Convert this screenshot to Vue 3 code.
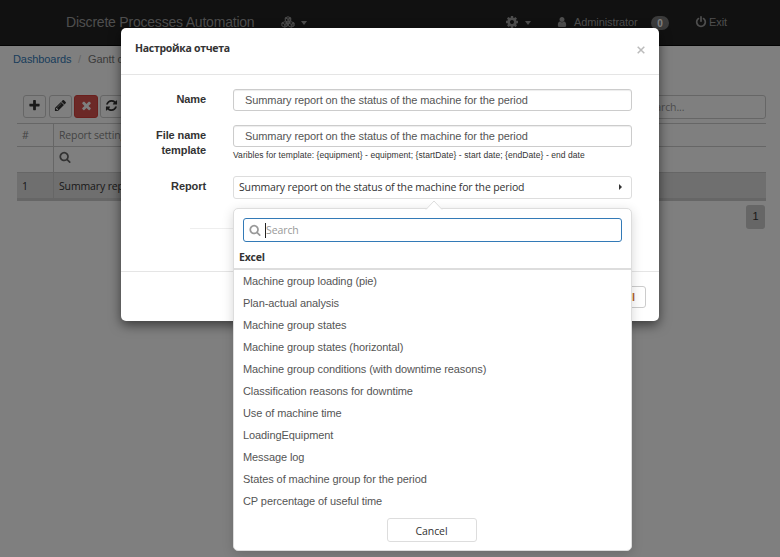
<script setup>
import { ref } from 'vue'

const icons = {
  plus: 'M1600 736v192q0 40-28 68t-68 28h-416v416q0 40-28 68t-68 28h-192q-40 0-68-28t-28-68v-416h-416q-40 0-68-28t-28-68v-192q0-40 28-68t68-28h416v-416q0-40 28-68t68-28h192q40 0 68 28t28 68v416h416q40 0 68 28t28 68z',
  pencil: 'M491 1536l91-91-235-235-91 91v107h128v128h107zm523-928q0-22-22-22-10 0-17 7l-542 542q-7 7-7 17 0 22 22 22 10 0 17-7l542-542q7-7 7-17zm-54-192l416 416-832 832h-416v-416zm683 96q0 53-37 90l-166 166-416-416 166-165q36-38 90-38 53 0 91 38l235 234q37 39 37 91z',
  times: 'M1490 1322q0 40-28 68l-136 136q-28 28-68 28t-68-28l-294-294-294 294q-28 28-68 28t-68-28l-136-136q-28-28-28-68t28-68l294-294-294-294q-28-28-28-68t28-68l136-136q28-28 68-28t68 28l294 294 294-294q28-28 68-28t68 28l136 136q28 28 28 68t-28 68l-294 294 294 294q28 28 28 68z',
  refresh: 'M1639 1056q0 5-1 7-64 268-268 434.5t-478 166.5q-146 0-282.5-55t-243.5-157l-129 129q-19 19-45 19t-45-19-19-45v-448q0-26 19-45t45-19h448q26 0 45 19t19 45-19 45l-137 137q71 66 161 102t187 36q134 0 250-65t186-179q11-17 53-117 8-23 30-23h192q13 0 22.5 9.5t9.5 22.5zm25-800v448q0 26-19 45t-45 19h-448q-26 0-45-19t-19-45 19-45l138-138q-148-137-349-137-134 0-250 65t-186 179q-11 17-53 117-8 23-30 23h-199q-13 0-22.5-9.5t-9.5-22.5v-7q65-268 270-434.5t480-166.5q146 0 284 55.5t245 156.5l130-129q19-19 45-19t45 19 19 45z',
  cog: 'M1152 896q0-106-75-181t-181-75-181 75-75 181 75 181 181 75 181-75 75-181zm512-109v222q0 12-8 23t-20 13l-185 28q-19 54-39 91 35 50 107 138 10 12 10 25t-9 23q-27 37-99 108t-94 71q-12 0-26-9l-138-108q-44 23-91 38-16 136-29 186-7 28-36 28h-222q-14 0-24.5-8.5t-11.5-21.5l-28-184q-49-16-90-37l-141 107q-10 9-25 9-14 0-25-11-126-114-165-168-7-10-7-23 0-12 8-23 15-21 51-66.5t54-70.5q-27-50-41-99l-183-27q-13-2-21-12.5t-8-23.5v-222q0-12 8-23t19-13l186-28q14-46 39-92-40-57-107-138-10-12-10-24 0-10 9-23 26-36 98.5-107.5t94.5-71.5q13 0 26 10l138 107q44-23 91-38 16-136 29-186 7-28 36-28h222q14 0 24.5 8.5t11.5 21.5l28 184q49 16 90 37l142-107q9-9 24-9 13 0 25 10 129 119 165 170 7 8 7 22 0 12-8 23-15 21-51 66.5t-54 70.5q26 50 41 98l183 28q13 2 21 12.5t8 23.5z',
  power: 'M1664 896q0 156-61 298t-164 245-245 164-298 61-298-61-245-164-164-245-61-298q0-182 80.5-343t226.5-270q43-32 95.5-25t83.5 50q32 42 24.5 94.5t-49.5 84.5q-98 74-151.5 181t-53.5 228q0 104 40.5 198.5t109.5 163.5 163.5 109.5 198.5 40.5 198.5-40.5 163.5-109.5 109.5-163.5 40.5-198.5q0-121-53.5-228t-151.5-181q-42-32-49.5-84.5t24.5-94.5q31-43 84-50t95 25q146 109 226.5 270t80.5 343zm-640-768v640q0 52-38 90t-90 38-90-38-38-90v-640q0-52 38-90t90-38 90 38 38 90z',
  search: 'M1216 832q0-185-131.5-316.5t-316.5-131.5-316.5 131.5-131.5 316.5 131.5 316.5 316.5 131.5 316.5-131.5 131.5-316.5zm512 832q0 52-38 90t-90 38q-54 0-90-38l-343-342q-179 124-399 124-143 0-273.5-55.5t-225-150-150-225-55.5-273.5 55.5-273.5 150-225 225-150 273.5-55.5 273.5 55.5 225 150 150 225 55.5 273.5q0 220-124 399l343 343q37 37 37 90z',
  user: 'M1536 1399q0 109-62.5 187t-150.5 78h-854q-88 0-150.5-78t-62.5-187q0-85 8.5-160.5t31.5-152 58.5-131 94-89 134.5-34.5q131 128 313 128t313-128q76 0 134.5 34.5t94 89 58.5 131 31.5 152 8.5 160.5zm-256-887q0 159-112.5 271.5t-271.5 112.5-271.5-112.5-112.5-271.5 112.5-271.5 271.5-112.5 271.5 112.5 112.5 271.5z',
}

const reportName = ref('Summary report on the status of the machine for the period')
const reports = [
  'Machine group loading (pie)',
  'Plan-actual analysis',
  'Machine group states',
  'Machine group states (horizontal)',
  'Machine group conditions (with downtime reasons)',
  'Classification reasons for downtime',
  'Use of machine time',
  'LoadingEquipment',
  'Message log',
  'States of machine group for the period',
  'CP percentage of useful time',
]
</script>

<template>
  <div class="page">
    <header class="navbar">
      <span class="brand">Discrete Processes Automation</span>
      <svg class="cubes" viewBox="0 0 28 24">
        <g fill="none" stroke="currentColor" stroke-width="2" stroke-linejoin="round">
          <path d="M14 1.5l5.500 2.300v6L14 12.200 8.500 9.800v-6zM8.500 3.800L14 6.200l5.500-2.400M14 6.200v6" />
          <path d="M7.500 11.500l5.700 2.400v6l-5.700 2.600-5.700-2.600v-6zM1.800 13.900l5.700 2.500 5.700-2.500M7.500 16.400v6" />
          <path d="M20.500 11.500l5.700 2.400v6l-5.700 2.600-5.700-2.600v-6zM14.800 13.900l5.700 2.500 5.700-2.500M20.500 16.400v6" />
        </g>
        <path fill="currentColor" d="M14 6.200l5.500-2.400v6L14 12.200zM7.500 16.400l5.700-2.500v6l-5.700 2.600zM20.500 16.400l5.700-2.500v6l-5.700 2.600z" opacity=".55" />
      </svg>
      <i class="caret caret-first"></i>
      <svg class="cog" viewBox="128 128 1536 1536"><path :d="icons.cog" /></svg>
      <i class="caret caret-second"></i>
      <svg class="user" viewBox="128 128 1536 1536"><path :d="icons.user" /></svg>
      <span class="admin">Administrator</span>
      <span class="badge">0</span>
      <svg class="power" viewBox="0 0 1792 1792"><path :d="icons.power" /></svg>
      <span class="exit">Exit</span>
    </header>

    <nav class="crumbs">
      <a>Dashboards</a><span class="slash">/</span><span class="current">Gantt chart</span>
    </nav>

    <div class="toolbar">
      <button class="tool"><svg viewBox="0 0 1792 1792"><path :d="icons.plus" /></svg></button>
      <button class="tool"><svg viewBox="0 0 1792 1792"><path :d="icons.pencil" /></svg></button>
      <button class="tool danger"><svg viewBox="0 0 1792 1792"><path :d="icons.times" /></svg></button>
      <button class="tool"><svg viewBox="0 0 1792 1792"><path :d="icons.refresh" /></svg></button>
      <div class="grid-search">Search...</div>
    </div>

    <div class="grid">
      <div class="grid-row head"><span class="num">#</span><span class="cell">Report settings</span></div>
      <div class="grid-row filter">
        <span class="num"></span>
        <span class="cell"><svg viewBox="0 0 1792 1792"><path :d="icons.search" /></svg></span>
      </div>
      <div class="grid-row selected"><span class="num">1</span><span class="cell">Summary report</span></div>
    </div>
    <div class="pager"><span>1</span></div>

    <div class="backdrop">
      <section class="modal">
        <div class="modal-head">
          <h4>Настройка отчета</h4>
          <svg class="close" viewBox="0 0 8 8"><path d="M.7.700l6.600 6.600M7.300.700L.700 7.300" /></svg>
        </div>
        <div class="modal-body">
          <div class="row">
            <label>Name</label>
            <div class="input">{{ reportName }}</div>
          </div>
          <div class="row template-row">
            <label>File name<br />template</label>
            <div class="field">
              <div class="input">{{ reportName }}</div>
              <small>Varibles for template: {equipment} - equipment; {startDate} - start date; {endDate} - end date</small>
            </div>
          </div>
          <div class="row report-row">
            <label>Report</label>
            <div class="field">
              <div class="select"><span>{{ reportName }}</span><i></i></div>
              <div class="dropdown">
                <svg class="pointer" viewBox="0 0 18 10"><path d="M1 9.500L9 1l8 8.500" /></svg>
                <div class="search">
                  <svg viewBox="0 0 1792 1792"><path :d="icons.search" /></svg>
                  <i class="cursor"></i><span>Search</span>
                </div>
                <div class="group">Excel</div>
                <ul>
                  <li v-for="item in reports" :key="item">{{ item }}</li>
                </ul>
                <div class="actions"><button>Cancel</button></div>
              </div>
            </div>
          </div>
          <div class="rule"></div>
        </div>
        <div class="modal-foot"><button>Cancel</button></div>
      </section>
    </div>
  </div>
</template>

<style>
body { margin: 0; overflow: hidden; }
</style>

<style scoped>
* { box-sizing: border-box; }
.page {
  position: relative;
  width: 780px;
  height: 557px;
  overflow: hidden;
  background: #fff;
  color: #333;
  font: 11px/15px "Liberation Sans", Arial, sans-serif;
  letter-spacing: -.09px;
}
svg { display: block; flex: none; fill: currentColor; }
button { font: inherit; color: inherit; letter-spacing: inherit; padding: 0; }

.navbar {
  display: flex;
  align-items: center;
  height: 46px;
  padding: 0 0 1px 66px;
  background: #222;
  border-bottom: 1px solid #080808;
  color: #9d9d9d;
  white-space: nowrap;
}
.brand { width: 188px; font-size: 14px; letter-spacing: -.21px; }
.cubes { width: 14px; height: 12px; margin-left: 27px; }
.caret { border: 3.500px solid transparent; border-top: 4px solid; border-bottom: 0; flex: none; margin-top: 1px; }
.caret-first { margin-left: 6px; }
.cog { width: 12px; height: 12px; margin-left: 199px; }
.caret-second { margin-left: 7px; }
.user { width: 10px; height: 10px; margin-left: 26px; }
.admin { width: 64px; margin-left: 7px; }
.badge {
  width: 18px;
  height: 14px;
  margin: 2px 0 0 13px;
  border-radius: 7px;
  background: #777;
  color: #fff;
  font-weight: bold;
  font-size: 10px;
  line-height: 15px;
  text-align: center;
}
.power { width: 12px; height: 12px; margin-left: 26px; }
.exit { margin-left: 2px; }

.crumbs { display: flex; height: 49px; padding: 6px 0 0 13px; }
.crumbs a { width: 58px; color: #337ab7; }
.slash { width: 17px; padding-left: 7px; color: #ccc; }
.current { color: #777; }

.toolbar { display: flex; gap: 3px; height: 28px; padding: 0 14px 0 23px; }
.tool {
  display: flex;
  align-items: center;
  justify-content: center;
  width: 23px;
  height: 23px;
  background: #fff;
  border: 1px solid #ccc;
  border-radius: 3px;
}
.tool svg { width: 13px; height: 13px; margin-top: -2px; }
.tool.danger { width: 24px; margin: 0 -1px; background: #d9534f; border-color: #d43f3a; color: #fff; }
.grid-search {
  width: 140px;
  height: 24px;
  margin-left: auto;
  padding: 4px 0 0 17px;
  border: 1px solid #ccc;
  border-radius: 3px;
  color: #999;
  font: 10.500px/15px "Open Sans", "Noto Sans", sans-serif;
  letter-spacing: -.14px;
}

.grid {
  margin: 0 14px 0 17px;
  border-top: 1px solid #ccc;
  font: 10.500px/15px "Open Sans", "Noto Sans", sans-serif;
  letter-spacing: -.14px;
}
.grid-row { display: flex; border-bottom: 1px solid #ccc; }
.num { width: 37px; padding-left: 5px; border-right: 1px solid #ccc; }
.cell { padding-left: 5px; white-space: nowrap; }
.head { height: 23px; line-height: 22px; color: #888; }
.filter { height: 25px; color: #666; border-bottom: 0; }
.filter svg { width: 12px; height: 12px; margin-top: 4px; }
.selected { height: 29px; line-height: 26px; background: #dedede; border-top: 1px solid #ccc; border-bottom: 3px solid #ccc; }
.pager { display: flex; justify-content: flex-end; padding: 4px 15px 0 0; }
.pager span { width: 19px; height: 24px; border-radius: 3px; background: #ccc; line-height: 22px; text-align: center; }

.backdrop { position: absolute; inset: 0; padding: 28px 0 0 121px; background: rgba(0, 0, 0, .5); }
.modal {
  width: 538px;
  height: 293px;
  background: #fff;
  border-radius: 5px;
  box-shadow: 0 4px 12px rgba(0, 0, 0, .55);
}
.modal-head {
  display: flex;
  justify-content: space-between;
  height: 47px;
  padding: 12px 14px 0;
  border-bottom: 1px solid #e5e5e5;
}
h4 { margin: 0; font: bold 10.500px/16px "Open Sans", "Noto Sans", sans-serif; letter-spacing: -.29px; }
.close { width: 8px; height: 8px; margin-top: 6px; stroke: #bbb; stroke-width: 1.500; }
.modal-body { display: flex; flex-direction: column; height: 196px; padding: 14px 27px 0 0; }
.row { display: flex; justify-content: space-between; height: 36px; }
label { width: 85px; padding-top: 3px; text-align: right; font-weight: bold; font-size: 11px; }
.field { position: relative; width: 399px; }
.input {
  width: 399px;
  height: 22px;
  padding-left: 11px;
  border: 1px solid #ccc;
  border-radius: 3px;
  box-shadow: inset 0 1px 1px rgba(0, 0, 0, .075);
  color: #555;
  line-height: 21px;
  white-space: nowrap;
}
.template-row { height: 51px; }
small { display: block; font-size: 8.500px; line-height: 16px; letter-spacing: .065px; white-space: nowrap; }
.report-row { height: 51px; }
.select {
  display: flex;
  align-items: center;
  justify-content: space-between;
  height: 23px;
  padding: 0 9px 0 5px;
  border: 1px solid #ddd;
  border-radius: 3px;
  font: 10.500px/15px "Open Sans", "Noto Sans", sans-serif;
  letter-spacing: -.15px;
  white-space: nowrap;
}
.select i { border: 3px solid transparent; border-left: 3px solid #333; border-right: 0; margin-bottom: 2px; }
.rule { height: 1px; margin: 1px 0 0 69px; background: #eee; }
.modal-foot { display: flex; justify-content: flex-end; padding: 14px 13px 0; border-top: 1px solid #e5e5e5; }
.modal-foot button {
  width: 60px;
  height: 22px;
  padding-right: 10px;
  background: #fff;
  border: 1px solid #ccc;
  border-radius: 3px;
  color: #b3622d;
  font-weight: bold;
  text-align: right;
}

.dropdown {
  position: absolute;
  top: 32px;
  left: 0;
  width: 399px;
  height: 343px;
  background: #fff;
  border: 1px solid #ddd;
  border-radius: 5px;
  box-shadow: 0 3px 12px rgba(0, 0, 0, .16);
}
.pointer { position: absolute; top: -9px; left: 191px; width: 18px; height: 10px; fill: #fff; stroke: #ddd; }
.search {
  display: flex;
  align-items: center;
  height: 24px;
  margin: 9px 9px 0;
  padding-left: 5px;
  border: 1px solid #337ab7;
  border-radius: 3px;
  color: #999;
  font: 10.500px/15px "Open Sans", "Noto Sans", sans-serif;
  letter-spacing: -.1px;
}
.search span { padding-top: 1px; }
.search svg { width: 12px; height: 12px; margin-bottom: 1px; }
.cursor { width: 1px; height: 15px; margin-left: 4px; background: #222; }
.group {
  height: 28px;
  padding: 7px 5px 0;
  border-bottom: 2px solid #ddd;
  font: bold 10.500px/16px "Open Sans", "Noto Sans", sans-serif;
  letter-spacing: -.2px;
}
ul { height: 237px; margin: 0; padding: 0 9px; overflow: hidden; list-style: none; color: #555; }
li { height: 22px; line-height: 23px; white-space: nowrap; }
.actions { display: flex; justify-content: center; padding: 11px 2px 0 0; }
.actions button {
  width: 90px;
  height: 24px;
  padding-top: 2px;
  background: #fff;
  border: 1px solid #ddd;
  border-radius: 3px;
  font: 10.500px/15px "Open Sans", "Noto Sans", sans-serif;
}
</style>
